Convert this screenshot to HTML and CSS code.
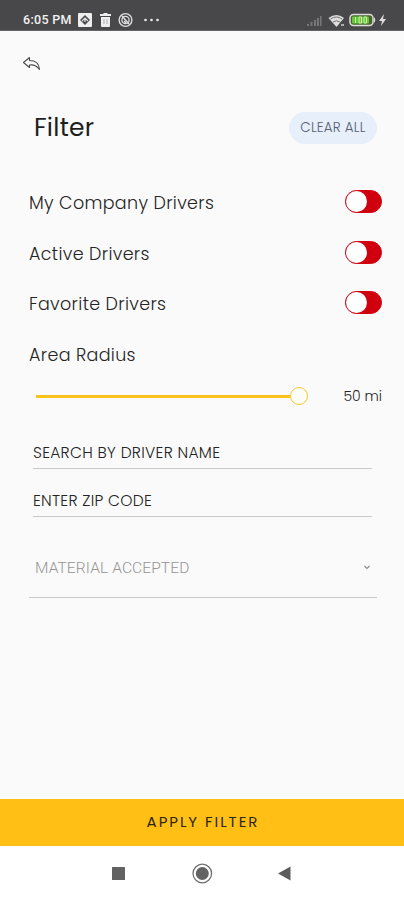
FILE: index.html
```html
<!DOCTYPE html>
<html lang="en">
<head>
<meta charset="utf-8">
<title>Filter</title>
<link rel="stylesheet" href="styles.css">
</head>
<body>
<div class="screen">
  <header class="status">
    <span class="time">6:05 PM</span>
    <svg class="status-left" width="90" height="18" viewBox="0 0 90 18">
      <rect x="2" y="2" width="14" height="14" rx="1" fill="#eee"/>
      <path d="M9 4l5 5-5 5-5-5z" fill="#4a4a4c"/>
      <path d="M6 10l3-3 3 3M9 8v3" fill="none" stroke="#ddd" stroke-width="1.2"/>
      <path d="M24 4h11M27.500 3h4" stroke="#eee" stroke-width="2"/>
      <path d="M25 6h9v9q0 1-1 1h-7q-1 0-1-1z" fill="#eee"/>
      <path d="M28 8v5M31 8v5" stroke="#999" stroke-width=".8"/>
      <circle cx="49.500" cy="9" r="6.400" fill="none" stroke="#ddd" stroke-width="1.400"/>
      <circle cx="49.500" cy="9" r="3.600" fill="none" stroke="#ddd" stroke-width="1.300"/>
      <path d="M46 5l7 8M48 10l2 2" stroke="#ddd" stroke-width="1.400"/>
      <g fill="#eee"><circle cx="69.500" cy="9" r="1.300"/><circle cx="75.500" cy="9" r="1.300"/><circle cx="81.500" cy="9" r="1.300"/></g>
    </svg>
    <svg class="status-right" width="82" height="18" viewBox="0 0 82 18">
      <g fill="#77777a"><rect x="1" y="13" width="2" height="2"/><rect x="4.500" y="11" width="2" height="4"/><rect x="8" y="9" width="2" height="6"/><rect x="11" y="7" width="2" height="8"/><rect x="14" y="5" width="1.500" height="10"/></g>
      <path d="M22.500 7q8-6 15.500 0l-7.500 9z" fill="#ddd"/>
      <path d="M24.500 8q6-4 11.500 0M27 11q3.500-2.500 7 0" stroke="#666" stroke-width=".9" fill="none"/>
      <path d="M34 11h5v5h-5z" fill="#4a4a4c"/><path d="M35 14h3" stroke="#ccc" stroke-width="1.500"/>
      <rect x="44" y="3.500" width="23" height="11" rx="3.500" fill="#47652e" stroke="#ddd" stroke-width="1.500"/>
      <path d="M68 6q2.500 3 0 6z" fill="#ddd"/>
      <rect x="46" y="5.500" width="17" height="7" rx="1" fill="#62c934"/>
      <path d="M49.500 6v6M53 6v6h2.500V6zM58 6v6h2.500V6z" fill="none" stroke="#d9e8b5" stroke-width="1"/>
      <path d="M78 3l-5 7h3l-1 5 5-7h-3z" fill="#ddd"/>
    </svg>
  </header>
  <nav class="toolbar">
    <svg width="20" height="16" viewBox="0 0 20 16"><path d="M7.500 1.500L1.500 6.500l6 5V9q6-1 10 4.500Q17 4.500 7.500 4.500z" fill="none" stroke="#4b4b4b" stroke-width="1.100" stroke-linejoin="round"/></svg>
  </nav>
  <div class="heading">
    <h1><span>Filter</span></h1>
    <button class="clear"><span>CLEAR ALL</span></button>
  </div>
  <main>
    <div class="row"><span>My Company Drivers</span><i class="switch"></i></div>
    <div class="row"><span>Active Drivers</span><i class="switch"></i></div>
    <div class="row"><span>Favorite Drivers</span><i class="switch"></i></div>
    <div class="row"><span>Area Radius</span></div>
    <div class="range"><div class="track"></div><div class="thumb"></div><span class="miles">50 mi</span></div>
    <div class="field name"><span>SEARCH BY DRIVER NAME</span></div>
    <div class="field zip"><span>ENTER ZIP CODE</span></div>
    <div class="select"><span>MATERIAL ACCEPTED</span><svg width="8" height="6" viewBox="0 0 8 6"><path d="M1.500 1L4 3.500 6.500 1" fill="none" stroke="#888" stroke-width="1.100"/></svg></div>
  </main>
  <button class="apply"><span>APPLY FILTER</span></button>
  <footer class="nav">
    <svg width="404" height="54" viewBox="0 0 404 54"><rect x="112" y="21" width="13" height="13" rx=".5" fill="#626262"/><circle cx="202.300" cy="27.500" r="9.300" fill="none" stroke="#707070" stroke-width="1.300"/><circle cx="202.300" cy="27.500" r="6.500" fill="#626262"/><path d="M278 27.500l12.500-7v14z" fill="#5c5c5c"/></svg>
  </footer>
</div>
</body>
</html>
```
FILE: styles.css
```css
* { box-sizing: border-box; }
body { margin: 0; }
.screen {
  width: 404px; height: 900px; background: #fafafa; color: #242424;
  display: flex; flex-direction: column; overflow: hidden;
  font-family: Poppins, Inter, "Open Sans", sans-serif; font-weight: 300;
}
span { white-space: nowrap; }
button { border: 0; padding: 0; font: inherit; color: inherit; }
.status {
  height: 31px; flex: none; background: #48484a; border-bottom: 1px solid #656567;
  display: flex; align-items: center; padding: 9px 16px 0 23px;
}
.time { font: 500 12.5px/20px Roboto, sans-serif; color: #f2f2f2; width: 53px; letter-spacing: .3px; }
.status-right { margin-left: auto; }
.toolbar { height: 66px; padding: 25px 0 0 22px; flex: none; }
.toolbar svg { display: block; }
.heading { height: 62px; flex: none; display: flex; align-items: center; justify-content: space-between; padding: 0 27px 0 34px; }
h1 { margin: 0; font-size: 25px; font-weight: 400; line-height: 30px; letter-spacing: .25px; color: #1e1e1e; }
.clear { width: 88px; height: 32px; border-radius: 16px; background: #e6effa; color: #566172; font-size: 13.500px; letter-spacing: .2px; }
main { flex: 1; padding: 19px 22px 0 29px; }
.row { height: 50.600px; display: flex; align-items: center; justify-content: space-between; font-size: 17.500px; letter-spacing: .34px; }
.switch { width: 37px; height: 23px; border-radius: 12px; background: #d1000f; border: 1px solid #d1000f; margin-top: -3px; }
.switch::before { content: ""; display: block; width: 21px; height: 21px; border-radius: 50%; background: #fff; }
.range { height: 32px; display: flex; align-items: center; padding-left: 7px; }
.track { width: 254px; height: 3px; background: #fac21e; }
.thumb { width: 18px; height: 18px; border: 1.500px solid #f7c530; border-radius: 50%; background: #fffdf8; }
.miles { margin-left: auto; font-size: 14px; }
.field { margin: 0 10px 0 4px; border-bottom: 1.500px solid #c9c9c9; font-size: 15.500px; letter-spacing: .28px; line-height: 20px; }
.name { height: 56.400px; padding-top: 30.400px; }
.zip { height: 48px; padding-top: 22px; }
.select { height: 81px; margin-right: 5px; padding: 22px 6px 0; border-bottom: 1.500px solid #c9c9c9; display: flex; align-items: center; justify-content: space-between; font: 300 15.500px/20px Roboto, sans-serif; letter-spacing: .12px; color: #949494; }
.apply { height: 47px; flex: none; background: #ffbf14; color: #30270f; font-size: 15px; letter-spacing: 1.950px; font-weight: 400; padding: 0 0 2px 2px; }
.nav { height: 54px; flex: none; background: #fff; }
.nav svg { display: block; }
```
